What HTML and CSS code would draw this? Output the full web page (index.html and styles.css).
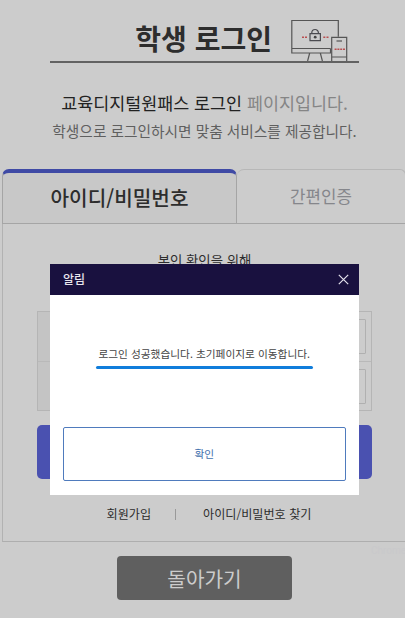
FILE: index.html
```html
<!DOCTYPE html>
<html lang="ko">
<head>
  <meta charset="utf-8">
  <meta content="width=device-width, initial-scale=1" name="viewport">
  <title>학생 로그인</title>
  <link rel="stylesheet" href="styles.css">
</head>
<body>
  <header class="page-head">
    <h1>학생 로그인</h1>
    <svg class="devices" width="60" height="43" viewBox="0 0 60 43" fill="none" stroke="#555" stroke-width="1.2">
      <path d="M40.5 30.5V35H1.8V2.5h46.5v16.3M1.8 30.5h38.7M19.7 35l-2.1 8M30.3 35l2.1 8"/>
      <path d="M41.7 43V19.3h15V43M41.7 39h15"/>
      <path d="M46.5 23h5.5"/>
      <path d="M21.8 15.5v-.7a3.3 3.3 0 0 1 6.6 0v.7M20 15.7h10.4v7H20z" stroke="#4b4b50"/>
      <circle cx="25.2" cy="19.2" r="1.4" fill="#444" stroke="none"/>
      <path d="M12 19.2h2M15 19.2h2M33.3 19.2h2M36.5 19.2h2M44.6 31.3h2M47.4 31.3h2M50.2 31.3h2M53 31.3h2" stroke="#b84f50" stroke-width="1.5"/>
    </svg>
  </header>
  <p class="lead"><strong>교육디지털원패스 로그인</strong> 페이지입니다.</p>
  <p class="desc">학생으로 로그인하시면 맞춤 서비스를 제공합니다.</p>

  <main class="login">
    <div class="tabs">
      <button class="tab tab-on" type="button">아이디/비밀번호</button>
      <button class="tab" type="button">간편인증</button>
    </div>
    <div class="panel">
      <p class="guide">본인 확인을 위해</p>
      <form class="fields">
        <div class="field"><input type="text"></div>
        <div class="field"><input type="password"></div>
      </form>
      <button class="submit" type="button"></button>
      <div class="links">
        <a>회원가입</a>
        <a>아이디/비밀번호 찾기</a>
      </div>
    </div>
  </main>
  <button class="back" type="button">돌아가기</button>
  <span class="browser">Chrome</span>

  <div class="modal">
    <div class="modal-head">
      <h2>알림</h2>
      <svg width="11" height="11" viewBox="0 0 11 11" stroke="#e4e2ec" stroke-width="1.2"><path d="M.8.8l9.4 9.4M10.2.8L.8 10.2"/></svg>
    </div>
    <div class="modal-body">
      <p class="message">로그인 성공했습니다. 초기페이지로 이동합니다.</p>
      <button class="confirm" type="button">확인</button>
    </div>
  </div>
</body>
</html>
```

FILE: styles.css
```css
* { box-sizing: border-box; }
html, body { height: 618px; margin: 0; overflow: hidden; }
body { background: #ccc; color: #2d2d2d; font-family: "Noto Sans CJK KR", sans-serif; position: relative; width: 405px; }
h1, h2, p { font-weight: 400; margin: 0; }
button { border: 0; font-family: inherit; padding: 0; }

.page-head { align-items: flex-end; border-bottom: 2px solid #626262; display: flex; height: 63px; justify-content: flex-end; margin: 0 46px 0 50px; padding-right: 9px; }
.page-head h1 { font-size: 28px; font-weight: 700; line-height: 44px; margin: 0 18px 1px 0; white-space: nowrap; }
.devices { flex: none; }

.lead, .desc { text-align: center; white-space: nowrap; }
.lead { color: #858585; font-size: 17.4px; line-height: 30px; margin-top: 25px; padding-left: 4px; }
.lead strong { color: #222; font-weight: 400; }
.desc { color: #5f5f5f; font-size: 14.7px; line-height: 24px; margin-top: 1px; padding-left: 4px; }

.login { margin: 26px 0 0 2px; width: 404px; }
.tabs { display: flex; height: 55px; }
.tab { background: #ccc; border: 1px solid #b7b7b7; border-bottom-color: #a5a5a5; border-left: 0; border-radius: 7px 6px 0 0; color: #85868b; font-size: 16.8px; padding-bottom: 1px; width: 169px; }
.tab-on { background: #c8c8c8; border: 1px solid #a5a5a5; border-top: 4px solid #3f4aa5; border-radius: 7px 7px 0 0; color: #2d2d2d; font-size: 20.2px; font-weight: 500; padding-bottom: 2px; width: 235px; }
.panel { border-bottom: 1px solid #aeaeae; border-left: 1px solid #b2b2b2; height: 318px; padding: 25px 34px 0 34px; }
.guide { font-size: 13.4px; line-height: 22px; text-align: center; }
.fields { border: 1px solid #b5b5b5; height: 100px; margin-top: 40px; }
.field { background: linear-gradient(90deg, #c4c4c4 70px, #ccc 70px); display: flex; height: 49px; justify-content: flex-end; padding: 7px 5px; }
.field + .field { border-top: 1px solid #b9b9b9; }
.field input { background: #ccc; border: 1px solid #b0b0b0; border-radius: 1px; height: 35px; width: 240px; }
.submit { background: #4a51b0; border-radius: 5px; display: block; height: 54px; margin-top: 14px; width: 100%; }
.links { display: flex; font-size: 12.1px; justify-content: center; line-height: 20px; margin-top: 25px; padding-left: 9px; }
.links a { align-items: center; display: flex; white-space: nowrap; }
.links a + a::before { background: #999; content: ""; height: 11px; margin: 0 27px 0 24px; width: 1px; }
.back { background: #5f5f5f; border-radius: 4px; color: #ccc; display: block; font-size: 20.2px; height: 44px; margin: 14px 0 0 117px; width: 175px; }
.browser { color: #c9c9cb; font: 10px Roboto, sans-serif; left: 371px; position: absolute; top: 545px; }

.modal { background: #fff; height: 231px; left: 49.5px; position: absolute; top: 263.5px; width: 309.5px; }
.modal-head { align-items: center; background: #19113f; color: #e8e6ee; display: flex; height: 31px; justify-content: space-between; padding: 0 10px 0 13.5px; }
.modal-head h2 { font-size: 12px; font-weight: 500; line-height: 18px; margin-bottom: 1px; }
.modal-body { display: flex; flex-direction: column; height: 200px; justify-content: space-between; padding: 49px 13.5px 14px; }
.message { align-self: center; color: #444; display: flex; flex-direction: column; font-size: 10.7px; gap: 2px; line-height: 20px; text-align: center; white-space: nowrap; width: 217px; }
.message::after { background: #107ddb; border-radius: 2px; content: ""; height: 3px; }
.confirm { background: #fff; border: 1.5px solid #4f7bbd; border-radius: 2px; color: #4170ad; font-size: 10.7px; height: 54px; padding-bottom: 1px; }
```
